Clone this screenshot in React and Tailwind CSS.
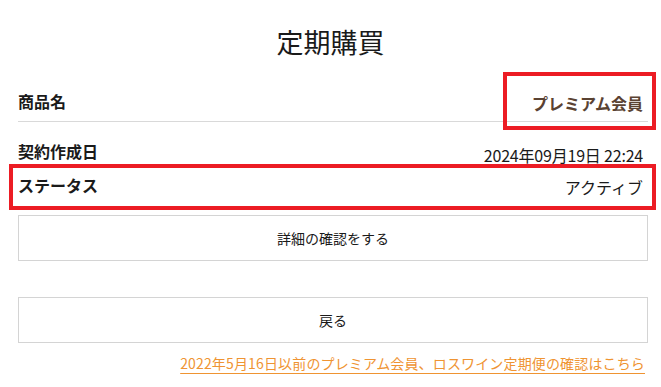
export default function App() {
  return (
    <div className="relative w-[661px] h-[387px] bg-white text-[#1a1a1a] font-['Noto_Sans_CJK_JP','Noto_Sans',sans-serif] overflow-hidden">
      <h1 className="pt-[22px] text-center text-[27px] leading-[40px] font-normal">定期購買</h1>

      <div className="ml-[18px] mr-[13px]">
        {/* 商品名 */}
        <div className="mt-[18px] h-[42px] flex justify-between items-center border-b border-[#d9d9d9] pr-[5px]">
          <span className="text-[16px] font-bold leading-[22px]">商品名</span>
          <span className="pt-[4px] text-[16px] font-bold leading-[22px] text-[#5a4232]">プレミアム会員</span>
        </div>

        {/* 契約作成日 */}
        <div className="h-[44px] flex justify-between items-start pr-[5px]">
          <span className="mt-[18px] text-[16px] font-bold leading-[22px]">契約作成日</span>
          <span className="mt-[22px] text-[16px] leading-[22px] tracking-[-0.2px]">2024年09月19日 22:24</span>
        </div>

        {/* ステータス */}
        <div className="h-[44px] flex justify-between items-start pr-[5px]">
          <span className="mt-[8px] text-[16px] font-bold leading-[22px]">ステータス</span>
          <span className="mt-[10px] text-[16px] leading-[22px]">アクティブ</span>
        </div>

        <button className="mt-[5px] w-full h-[46px] border border-[#d4d4d4] bg-white text-[14px] flex items-center justify-center">
          詳細の確認をする
        </button>

        <button className="mt-[36px] w-full h-[46px] border border-[#d4d4d4] bg-white text-[14px] flex items-center justify-center">
          戻る
        </button>

        <div className="mt-[10px] flex justify-end pr-[3px]">
          <a href="#" className="text-[14px] leading-[20px] tracking-[0.15px] text-[#ef9432] underline underline-offset-[4px] decoration-[1px]">
            2022年5月16日以前のプレミアム会員、ロスワイン定期便の確認はこちら
          </a>
        </div>
      </div>

      {/* annotation boxes */}
      <div className="absolute left-[503px] top-[72px] w-[153px] h-[58px] border-[4px] border-[#ec1c24]" />
      <div className="absolute left-[9px] top-[164px] w-[647px] h-[46px] border-[4px] border-[#ec1c24]" />
    </div>
  );
}
